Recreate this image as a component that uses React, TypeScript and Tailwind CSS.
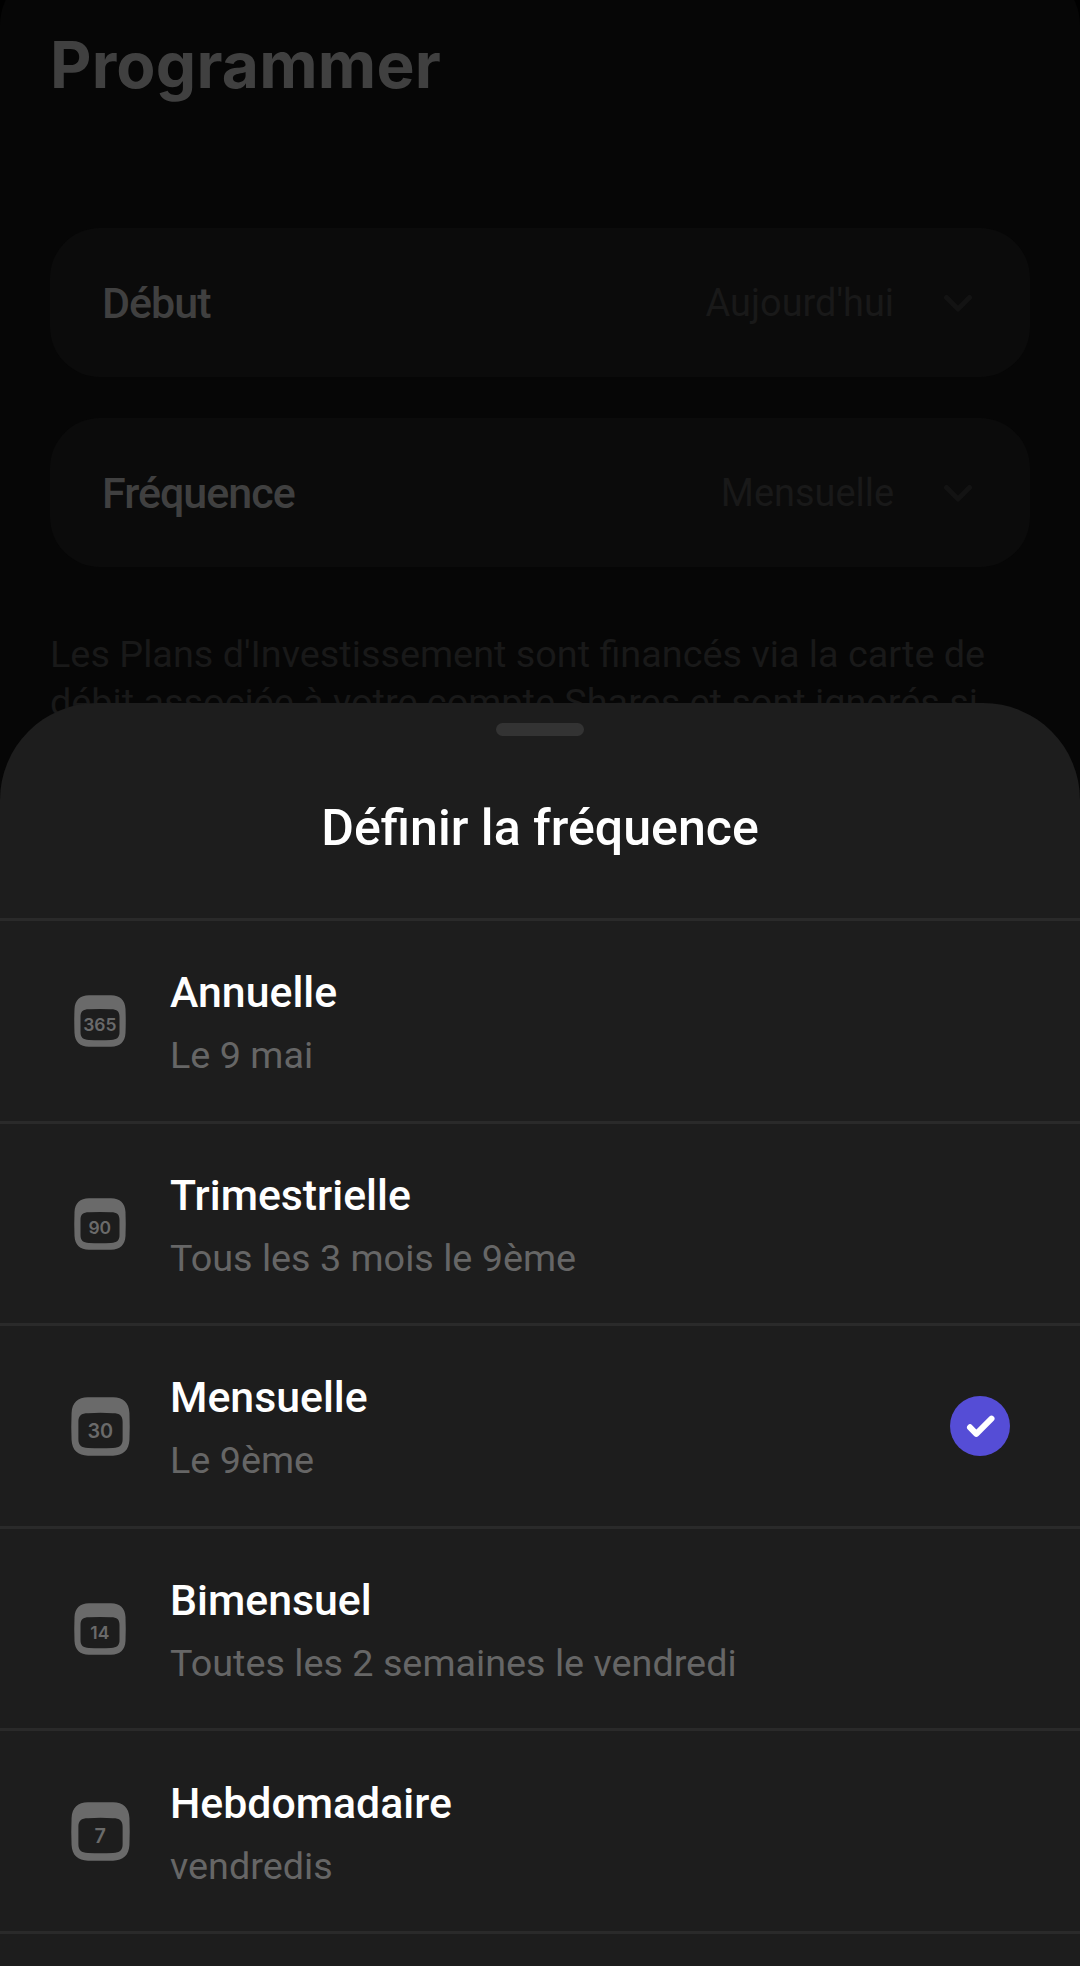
const fields = [
  { label: "Début", value: "Aujourd'hui" },
  { label: "Fréquence", value: "Mensuelle" },
];

const options = [
  { days: "365", title: "Annuelle", detail: "Le 9 mai", large: false },
  { days: "90", title: "Trimestrielle", detail: "Tous les 3 mois le 9ème", large: false },
  { days: "30", title: "Mensuelle", detail: "Le 9ème", large: true, selected: true },
  { days: "14", title: "Bimensuel", detail: "Toutes les 2 semaines le vendredi", large: false },
  { days: "7", title: "Hebdomadaire", detail: "vendredis", large: true },
];

function ChevronDown() {
  return (
    <svg className="h-5 w-[30px] text-[#131313]" viewBox="0 0 30 20" fill="none">
      <path d="M3.500 4.500 15 16 26.500 4.500" stroke="currentColor" strokeWidth="5" strokeLinecap="round" strokeLinejoin="round" />
    </svg>
  );
}

function CalendarIcon({ days, large }: { days: string; large: boolean }) {
  return (
    <svg className={large ? "size-[59px]" : "size-[52px]"} viewBox="0 0 52 52">
      <path
        fill="#6a6a6a"
        fillRule="evenodd"
        d="M15 0.300H37C46 0.300 51 5 51.500 14Q52 26 51.500 38C51 47 46 51.700 37 51.700H15C6 51.700 1 47 0.500 38Q0 26 0.500 14C1 5 6 0.300 15 0.300ZM15 14.300C9 14.300 6.500 16.500 6.500 22V37C6.500 42.500 9 44.700 15 44.900Q26 45.400 37 44.900C43 44.700 45.500 42.500 45.500 37V22C45.500 16.500 43 14.300 37 14.300Q26 13.600 15 14.300Z"
      />
      <text
        x="25.800"
        y="36"
        textAnchor="middle"
        fill="#6a6a6a"
        fontSize="17.500"
        fontWeight="600"
        fontFamily="Inter, sans-serif"
      >
        {days}
      </text>
    </svg>
  );
}

function CheckBadge() {
  return (
    <svg className="size-[60px]" viewBox="0 0 60 60" fill="none">
      <circle cx="30" cy="30" r="30" fill="#554dd6" />
      <path d="M20 31.300 26.300 37.800 41.500 22.600" stroke="#fff" strokeWidth="6" strokeLinecap="round" strokeLinejoin="round" />
    </svg>
  );
}

export default function App() {
  return (
    <div className="relative h-[1966px] w-[1080px] overflow-hidden bg-black font-[Roboto,sans-serif]">
      <main className="-mt-8 h-[900px] rounded-t-[57px] bg-[#060606] px-[50px] pt-8">
        <h1 className="pt-[25px] font-[Inter,sans-serif] text-[64px] leading-[80px] font-bold tracking-[0.200px] text-[#404040]">
          Programmer
        </h1>

        <div className="mt-[123px] flex flex-col gap-[41px]">
          {fields.map((field) => (
            <div key={field.label} className="flex h-[149px] items-center rounded-[50px] bg-[#0b0b0b] pr-[57px] pl-[52px]">
              <span className="pt-[2px] text-[43px] font-medium tracking-[-1px] text-[#404040]">{field.label}</span>
              <span className="ml-auto pt-[2px] text-[37.900px] text-[#191919]">{field.value}</span>
              <span className="ml-[49px]">
                <ChevronDown />
              </span>
            </div>
          ))}
        </div>

        <p className="mt-[63px] text-[37.800px] leading-[48px] whitespace-nowrap text-[#191919]">
          Les Plans d'Investissement sont financés via la carte de
          <br />
          débit associée à votre compte Shares et sont ignorés si
        </p>
      </main>

      <section className="absolute inset-x-0 top-[703px] bottom-0 overflow-hidden rounded-t-[97px] bg-[#1d1d1d]">
        <div className="mx-auto mt-5 h-[13px] w-[88px] rounded-full bg-[#333]" />
        <h2 className="mt-[62px] text-center text-[50.100px] leading-[60px] font-medium text-white">Définir la fréquence</h2>

        <ul className="mt-[60px] border-b-[3px] border-[#2a2a2a]">
          {options.map((option) => (
            <li key={option.title} className="flex h-[202.600px] items-center border-t-[3px] border-[#2a2a2a] pt-px pr-[70px]">
              <div className="flex w-[170px] justify-center pl-[30px]">
                <CalendarIcon days={option.days} large={option.large} />
              </div>
              <div className="pt-[5px]">
                <p className="text-[42.800px] leading-[60px] font-medium text-white">{option.title}</p>
                <p className="mt-[3px] text-[37.750px] leading-[60px] text-[#666]">{option.detail}</p>
              </div>
              {option.selected && (
                <div className="ml-auto">
                  <CheckBadge />
                </div>
              )}
            </li>
          ))}
        </ul>
      </section>
    </div>
  );
}
